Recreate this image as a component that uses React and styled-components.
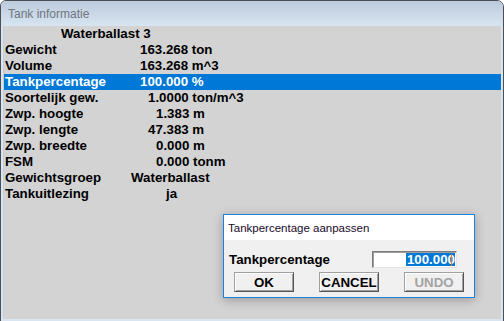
import React from "react";
import styled, { createGlobalStyle } from "styled-components";

const GlobalStyle = createGlobalStyle`
  html, body { margin: 0; padding: 0; background: #ffffff; }
  body { width: 504px; height: 321px; overflow: hidden; }
`;

const Window = styled.div`
  position: relative;
  box-sizing: border-box;
  width: 504px;
  height: 324px;
  border: 1px solid #4a4d52;
  border-radius: 6px 7px 0 0;
  background: #d9e5f1;
  display: flex;
  flex-direction: column;
  overflow: hidden;
`;

const TitleBar = styled.div`
  height: 25px;
  flex: none;
  display: flex;
  align-items: center;
  padding-left: 7px;
  background: linear-gradient(#bccbdc, #d7e4f1);
  font-family: "Liberation Sans", Arial, sans-serif;
  font-size: 12px;
  color: #6f7780;
`;

const Frame = styled.div`
  flex: 1;
  display: flex;
  padding: 0 2px 4px 2px;
`;

const Content = styled.div`
  flex: 1;
  background: #d3d3d3;
  border-left: 1px solid #c4ccd6;
  padding-top: 0;
  font-family: "Liberation Sans", Arial, sans-serif;
  font-weight: bold;
  font-size: 13.3px;
  color: #000;
`;

const Heading = styled.div`
  height: 16px;
  line-height: 16px;
  padding-left: 57px;
`;

const Row = styled.div`
  display: grid;
  grid-template-columns: 126px auto;
  height: 16px;
  line-height: 16px;
  padding-left: 1px;
  background: ${(p) => (p.$selected ? "#0078d7" : "transparent")};
  color: ${(p) => (p.$selected ? "#ffffff" : "#000000")};
  white-space: nowrap;
`;

const Label = styled.span``;

const Value = styled.span`
  padding-left: ${(p) => p.$indent}px;
`;

const Dialog = styled.div`
  position: absolute;
  left: 222px;
  top: 213px;
  width: 252px;
  height: 84px;
  box-sizing: border-box;
  border: 1px solid #1a82d8;
  background: #f0f0f0;
  box-shadow: 0 2px 10px rgba(0, 0, 0, 0.28);
  display: flex;
  flex-direction: column;
`;

const DialogTitle = styled.div`
  height: 25px;
  flex: none;
  background: #ffffff;
  display: flex;
  align-items: center;
  padding-left: 4px;
  font-family: "Liberation Sans", Arial, sans-serif;
  font-size: 11.5px;
  color: #1a0a2a;
`;

const DialogBody = styled.div`
  padding: 11px 0 0 0;
  font-family: "Liberation Sans", Arial, sans-serif;
  font-weight: bold;
  font-size: 13.3px;
  color: #000;
`;

const FieldRow = styled.div`
  display: flex;
  align-items: center;
  height: 17px;
  padding-left: 5px;
`;

const FieldLabel = styled.span`
  width: 143px;
`;

const Field = styled.div`
  position: relative;
  box-sizing: border-box;
  width: 85px;
  height: 17px;
  background: #ffffff;
  border-style: solid;
  border-width: 1px;
  border-color: #7a7a7a #e3e3e3 #e3e3e3 #7a7a7a;
  box-shadow: inset 1px 1px 0 #a0a0a0;
  display: flex;
  justify-content: flex-end;
  align-items: center;
  overflow: hidden;
  padding-right: 1px;
`;

const Selection = styled.span`
  background: #0078d7;
  color: #ffffff;
  height: 13px;
  line-height: 13px;
  padding-left: 1px;
  white-space: nowrap;
`;

const Caret = styled.span`
  position: absolute;
  right: 4px;
  top: 2px;
  width: 1px;
  height: 12px;
  background: #e07a20;
`;

const ButtonRow = styled.div`
  display: flex;
  gap: 25px;
  padding: 4px 0 0 10px;
`;

const Button = styled.div`
  box-sizing: border-box;
  width: 60px;
  height: 20px;
  display: flex;
  align-items: center;
  justify-content: center;
  background: #f0f0f0;
  border-style: solid;
  border-width: 1px;
  border-color: #a0a0a0 #555555 #555555 #a0a0a0;
  box-shadow: inset 1px 1px 0 #ffffff, inset -1px -1px 0 #a0a0a0;
  color: ${(p) => (p.$disabled ? "#a3a3a3" : "#000000")};
`;

const rows = [
  { label: "Gewicht", value: "163.268 ton", indent: 9 },
  { label: "Volume", value: "163.268 m^3", indent: 9 },
  { label: "Tankpercentage", value: "100.000 %", indent: 9, selected: true },
  { label: "Soortelijk gew.", value: "1.0000 ton/m^3", indent: 17 },
  { label: "Zwp. hoogte", value: "1.383 m", indent: 25 },
  { label: "Zwp. lengte", value: "47.383 m", indent: 17 },
  { label: "Zwp. breedte", value: "0.000 m", indent: 25 },
  { label: "FSM", value: "0.000 tonm", indent: 25 },
  { label: "Gewichtsgroep", value: "Waterballast", indent: 0 },
  { label: "Tankuitlezing", value: "ja", indent: 35 },
];

export default function App() {
  return (
    <>
      <GlobalStyle />
      <Window>
        <TitleBar>Tank informatie</TitleBar>
        <Frame>
          <Content>
            <Heading>Waterballast 3</Heading>
            {rows.map((r) => (
              <Row key={r.label} $selected={r.selected}>
                <Label>{r.label}</Label>
                <Value $indent={r.indent}>{r.value}</Value>
              </Row>
            ))}
          </Content>
        </Frame>
        <Dialog>
          <DialogTitle>Tankpercentage aanpassen</DialogTitle>
          <DialogBody>
            <FieldRow>
              <FieldLabel>Tankpercentage</FieldLabel>
              <Field>
                <Selection>100.000</Selection>
                <Caret />
              </Field>
            </FieldRow>
            <ButtonRow>
              <Button>OK</Button>
              <Button>CANCEL</Button>
              <Button $disabled>UNDO</Button>
            </ButtonRow>
          </DialogBody>
        </Dialog>
      </Window>
    </>
  );
}
